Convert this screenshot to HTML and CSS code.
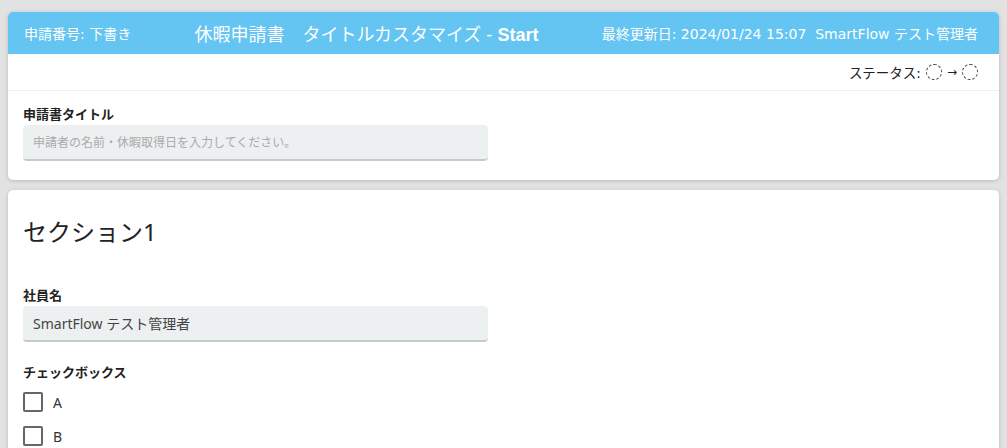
FILE: index.html
```html
<!DOCTYPE html>
<html lang="ja">
<head>
    <meta charset="UTF-8">
    <meta name="viewport" content="width=device-width, initial-scale=1.0">
    <title>休暇申請書</title>
    <link rel="stylesheet" href="styles.css">
</head>
<body>
    <div class="card headCard">
        <div class="formHeader">
            <span class="headInfo">申請番号: 下書き</span>
            <span class="headTitle">休暇申請書　タイトルカスタマイズ - <b>Start</b></span>
            <span class="headInfo">最終更新日: 2024/01/24 15:07&nbsp;&nbsp;SmartFlow テスト管理者</span>
        </div>
        <div class="statusRow">
            <span>ステータス:</span>
            <span class="statusDot"></span>
            <span class="arrow">→</span>
            <span class="statusDot"></span>
        </div>
        <div class="field titleField">
            <label class="fieldLabel">申請書タイトル</label>
            <div class="fieldInput placeholder">申請者の名前・休暇取得日を入力してください。</div>
        </div>
    </div>

    <div class="card sectionCard">
        <h2 class="sectionTitle">セクション1</h2>
        <div class="field">
            <label class="fieldLabel">社員名</label>
            <div class="fieldInput">SmartFlow テスト管理者</div>
        </div>
        <div class="field">
            <label class="fieldLabel">チェックボックス</label>
            <div class="checkList">
                <div class="checkItem"><span class="checkBox"></span>A</div>
                <div class="checkItem"><span class="checkBox"></span>B</div>
            </div>
        </div>
    </div>
</body>
</html>
```

FILE: styles.css
```css
* {
  box-sizing: border-box;
  margin: 0;
  padding: 0;
}

html, body {
  overflow: hidden;
}

body {
  background-color: #e2e2e2;
  font-family: "Noto Sans", "Noto Sans CJK JP", sans-serif;
  color: #333;
  padding: 12px 8px 0 8px;
}

.card {
  background-color: #fff;
  border-radius: 5px;
  box-shadow: 0 1px 4px rgba(0, 0, 0, 0.18);
}

.headCard {
  padding-bottom: 19px;
  margin-bottom: 10px;
}

.formHeader {
  height: 42px;
  background-color: #64c4f2;
  color: #fff;
  border-radius: 5px 5px 0 0;
  display: flex;
  align-items: center;
  justify-content: space-between;
  padding: 0 21px 0 16px;
}

.headInfo {
  font-family: "DejaVu Sans", "Noto Sans CJK JP", sans-serif;
  font-size: 14px;
}

.headTitle {
  font-family: "Liberation Sans", "Noto Sans CJK JP", sans-serif;
  font-size: 18px;
}

.statusRow {
  height: 37px;
  display: flex;
  align-items: center;
  justify-content: flex-end;
  gap: 3px;
  padding-right: 21px;
  border-bottom: 1px solid #eee;
  font-size: 13.5px;
  color: #222;
  font-family: "DejaVu Sans", "Noto Sans CJK JP", sans-serif;
}

.statusDot {
  width: 16px;
  height: 16px;
  border: 1px dashed #444;
  border-radius: 50%;
  margin-left: 2px;
}

.arrow {
  font-size: 12px;
  margin-left: 2px;
}

.field {
  padding: 0 511px 0 15px;
}

.titleField {
  padding-top: 14px;
}

.fieldLabel {
  display: block;
  font-size: 13px;
  font-weight: bold;
  color: #222;
  line-height: 18px;
  margin-bottom: 2px;
}

.fieldInput {
  height: 36px;
  background-color: #edf0f1;
  border-radius: 4px;
  border-bottom: 2px solid #c7cacb;
  padding: 0 10px;
  display: flex;
  align-items: center;
  font-size: 14px;
  color: #444;
}

.placeholder {
  font-size: 12px;
  color: #aaa;
}

.sectionCard {
  padding-top: 27px;
  height: 300px;
}

.sectionTitle {
  font-size: 24px;
  font-weight: normal;
  color: #222;
  padding-left: 15px;
  line-height: 30px;
  margin-bottom: 40px;
}

.sectionCard .fieldLabel {
  line-height: 16px;
  margin-bottom: 3px;
}

.sectionCard .field {
  margin-bottom: 22px;
}

.checkList {
  display: flex;
  flex-direction: column;
  gap: 14px;
  padding-top: 9px;
}

.checkItem {
  display: flex;
  align-items: center;
  gap: 10px;
  font-size: 14px;
  color: #333;
}

.checkBox {
  width: 20px;
  height: 20px;
  border: 2px solid #666;
  border-radius: 2px;
}
```
